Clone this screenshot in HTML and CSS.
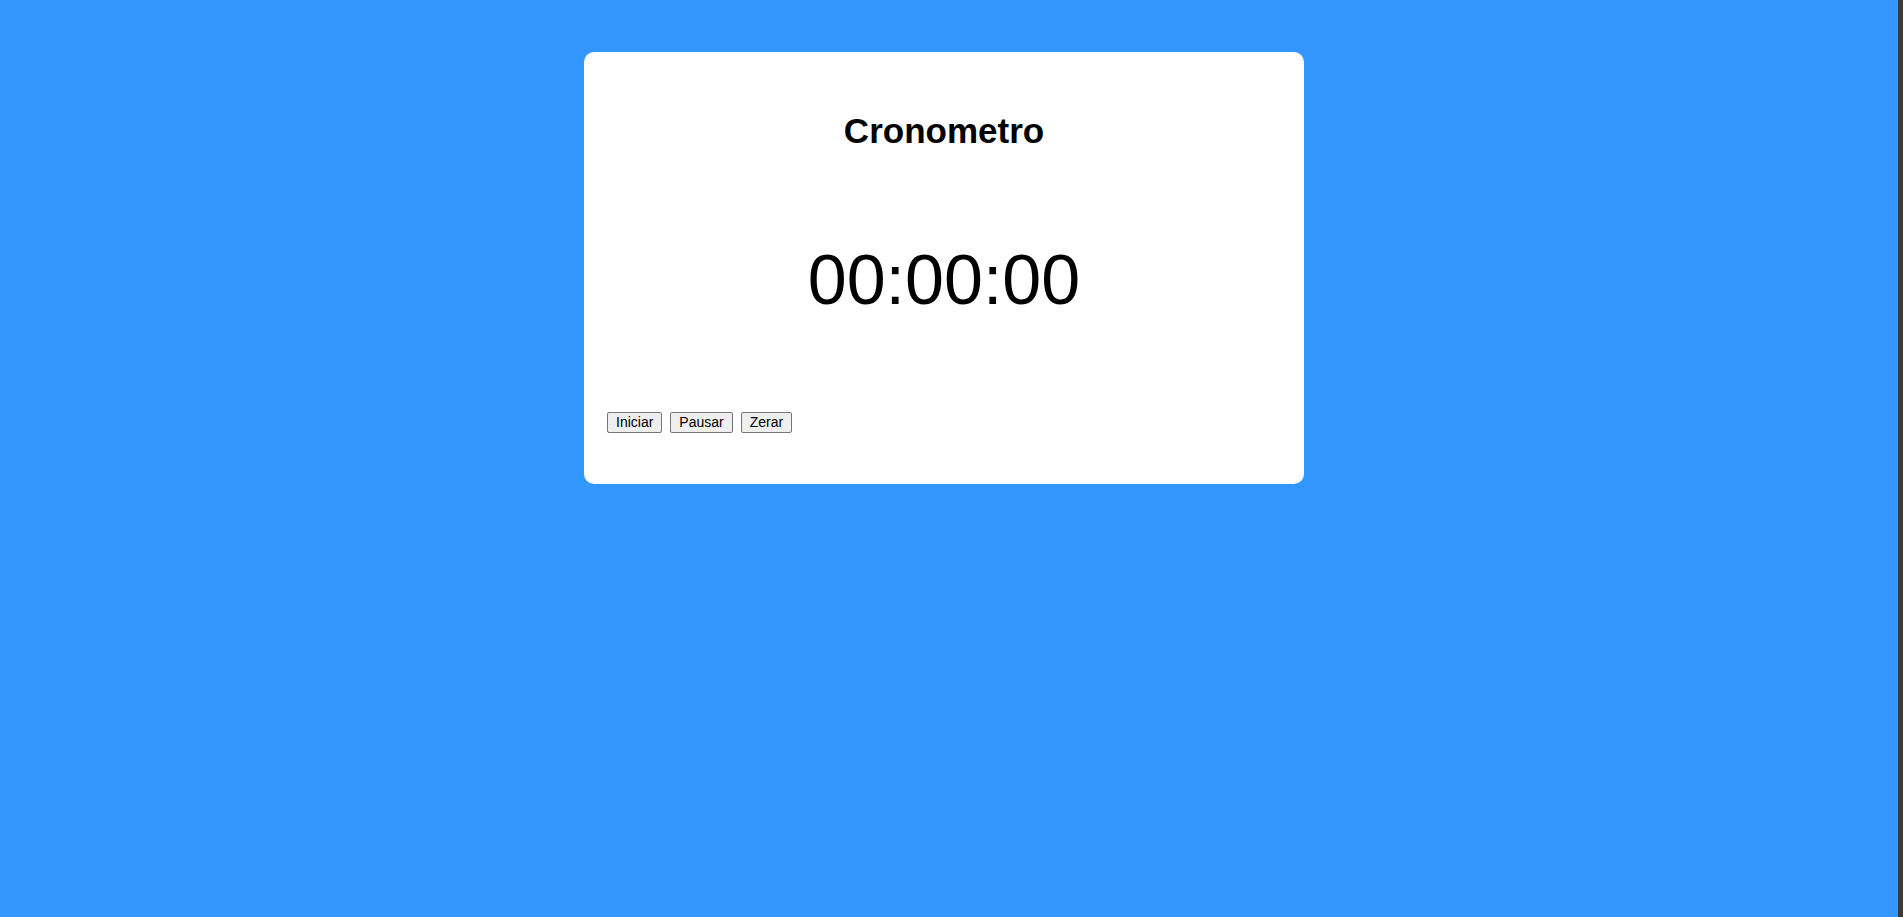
FILE: index.html
```html
<!DOCTYPE html>
<html lang="pt">
<head>
<meta charset="utf-8">
<title>Cronometro</title>
<link rel="stylesheet" href="styles.css">
</head>
<body>
<main class="page">
  <section class="card">
    <h1 class="title">Cronometro</h1>
    <div class="timer">00:00:00</div>
    <div class="controls">
      <button class="btn" type="button">Iniciar</button>
      <button class="btn" type="button">Pausar</button>
      <button class="btn" type="button">Zerar</button>
    </div>
  </section>
</main>
</body>
</html>
```

FILE: styles.css
```css
html {
  background: #3396ff;
}
body {
  margin: 0;
  min-height: 917px;
  box-sizing: border-box;
  background: #3396ff;
  padding-right: 10px;
  border-right: 5px solid #3a3a3a;
  font-family: "Liberation Sans", Arial, sans-serif;
}
.page {
  display: flex;
  justify-content: center;
  padding-top: 52px;
}
.card {
  width: 720px;
  box-sizing: border-box;
  background: #ffffff;
  border-radius: 10px;
  padding: 0 23px 51px;
}
.title {
  margin: 59px 0 0;
  text-align: center;
  font-size: 35px;
  line-height: 39px;
  font-weight: bold;
  color: #000;
}
.timer {
  margin-top: 90px;
  text-align: center;
  font-size: 70px;
  line-height: 80px;
  color: #000;
}
.controls {
  margin-top: 92px;
  display: flex;
  gap: 8px;
}
.btn {
  font-family: "Liberation Sans", Arial, sans-serif;
  font-size: 14px;
  line-height: 15px;
  color: #000;
  background: #efefef;
  border: 1px solid #767676;
  border-radius: 2px;
  padding: 2px 8px;
  margin: 0;
}
```
